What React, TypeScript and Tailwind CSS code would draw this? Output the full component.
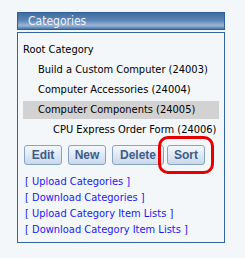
const rows = [
  { label: 'Root Category', pad: 'pl-0', active: false },
  { label: 'Build a Custom Computer (24003)', pad: 'pl-[15px]', active: false },
  { label: 'Computer Accessories (24004)', pad: 'pl-[15px]', active: false },
  { label: 'Computer Components (24005)', pad: 'pl-[15px]', active: true },
  { label: 'CPU Express Order Form (24006)', pad: 'pl-[30px]', active: false },
]

const links = [
  'Upload Categories',
  'Download Categories',
  'Upload Category Item Lists',
  'Download Category Item Lists',
]

const btn =
  "h-[20px] rounded-[3px] border border-[#86a3c4] bg-gradient-to-b from-[#f4f8fc] to-[#c9d9eb] font-['Liberation_Sans',sans-serif] text-[12px] font-bold text-[#3d5c88] leading-none flex items-center justify-center"

const App = () => {
  return (
    <div className="w-[245px] h-[258px] bg-[#f3f7fa] pt-[12px] pl-[17px] font-['DejaVu_Sans_Condensed','DejaVu_Sans',sans-serif] relative">
      <div className="w-[208px] h-[18px] border border-[#2f5f99] bg-[linear-gradient(to_bottom,#3f6ea3_0%,#5a84b4_45%,#9ab6d6_78%,#4a76aa_100%)] text-[#f0f4fa] text-[12px] leading-[16px] pl-[10px]">
        Categories
      </div>

      <div className="mt-[2px] w-[208px] h-[211px] border border-[#3465a0] pt-[7px]">
        {rows.map((r) => (
          <div key={r.label} className="h-[20px] flex items-center px-[5px]">
            <div
              className={`w-full h-[18px] flex items-center text-[11px] text-black whitespace-nowrap ${r.pad} ${r.active ? 'bg-[#d2d2d2]' : ''}`}
            >
              {r.label}
            </div>
          </div>
        ))}

        <div className="flex mt-[5px] pl-[6px]">
          <div className={`${btn} w-[38px]`}>Edit</div>
          <div className={`${btn} w-[38px] ml-[6px]`}>New</div>
          <div className={`${btn} w-[52px] ml-[6px]`}>Delete</div>
          <div className={`${btn} w-[38px] ml-[3px]`}>Sort</div>
        </div>

        <div className="mt-[9px] pl-[7px] flex flex-col">
          {links.map((l) => (
            <div key={l} className="h-[16px] leading-[16px] text-[11px] text-[#1a1aee] whitespace-nowrap">
              [ {l} ]
            </div>
          ))}
        </div>
      </div>

      {/* red annotation around Sort */}
      <div className="absolute left-[158px] top-[136px] w-[56px] h-[38px] border-[3px] border-[#e80000] rounded-[10px]" />
    </div>
  )
}

export default App
